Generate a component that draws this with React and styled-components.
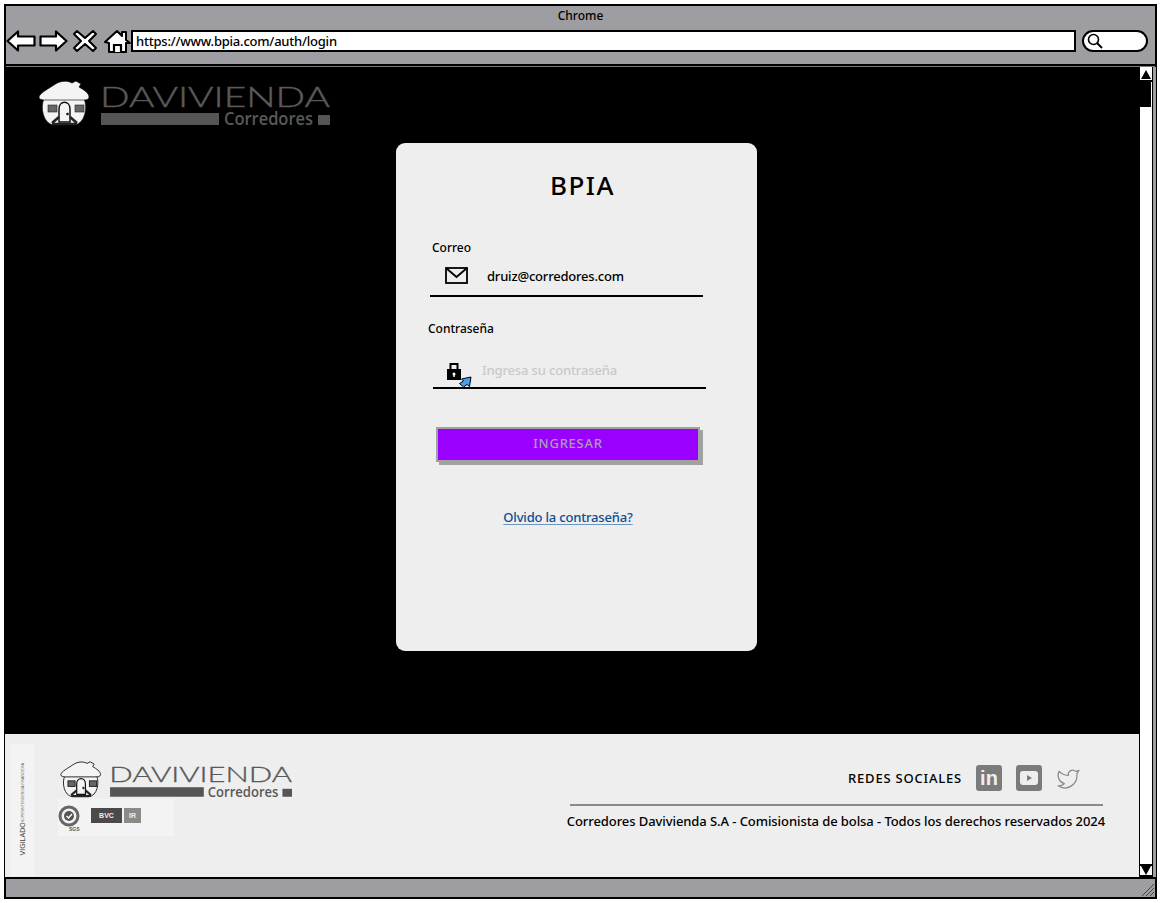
import React from 'react';
import styled, { createGlobalStyle } from 'styled-components';
import { Twitter } from 'lucide-react';

const FONT = `"Comic Sans MS", "Noto Sans", sans-serif`;

const Global = createGlobalStyle`
  html, body { margin: 0; padding: 0; background: #fff; }
  * { box-sizing: border-box; }
  body { font-family: ${FONT}; color: #000; }
`;

const Frame = styled.div`
  width: 1153px; height: 895px; margin: 4px 0 0 4px;
  border: 2px solid #000;
  display: flex; flex-direction: column;
  background: #9e9da2;
`;
const TitleBar = styled.header`
  height: 60px; flex: none; background: #9e9da2;
  display: flex; flex-direction: column;
  border-bottom: 2px solid #000;
`;
const Caption = styled.div`
  height: 22px; padding-top: 1px; text-align: center; font-size: 12px; line-height: 17px;
  font-weight: 500;
`;
const Toolbar = styled.div`
  display: flex; align-items: center; height: 26px;
`;
const NavIcon = styled.svg`
  flex: none; display: block; margin-right: ${p => p.$gap || 0}px;
`;
const UrlBar = styled.div`
  width: 945px; height: 22px; background: #fff; border: 2px solid #000;
  font-size: 13px; font-weight: 500; line-height: 19px; padding-left: 3px; letter-spacing: -.22px;
`;
const SearchPill = styled.div`
  width: 66px; height: 22px; margin-left: 6px; background: #fff; border: 2px solid #000; border-radius: 11px;
  display: flex; align-items: center; padding-left: 3px;
`;
const Viewport = styled.div`
  flex: 1; min-height: 0; display: flex; border-top: 1px solid #7c7c7e;
`;
const Page = styled.main`
  width: 1134px; flex: none; margin-left: -1px; display: flex; flex-direction: column; background: #000;
`;
const Hero = styled.section`
  height: 667px; flex: none; padding: 13px 0 0 33px;
`;
const CardWrap = styled.div`
  margin: 13px 0 0 358px;
`;
const Card = styled.div`
  width: 361px; height: 508px; background: #eee; border-radius: 9px;
  padding: 25px 0 0 34px; display: flex; flex-direction: column;
`;
const Title = styled.h1`
  margin: 0; width: 305px; text-align: center; font-size: 26px; line-height: 34px; font-weight: 500; letter-spacing: 1.5px;
`;
const FieldLabel = styled.label`
  display: block; font-size: 12px; line-height: 16px; font-weight: 500;
  margin: ${p => p.$top}px 0 0 ${p => p.$left}px;
`;
const FieldRow = styled.div`
  width: 273px; height: ${p => p.$h}px; border-bottom: 2px solid #000;
  margin: ${p => p.$top}px 0 0 ${p => p.$left}px; display: flex; align-items: flex-start; position: relative;
  padding-top: ${p => p.$pad}px;
`;
const FieldIcon = styled.svg`
  flex: none; margin-left: ${p => p.$left}px; margin-top: ${p => p.$top || 0}px;
`;
const FieldText = styled.span`
  margin-left: ${p => p.$left}px; font-size: 13px; line-height: 18px; font-weight: 500; letter-spacing: ${p => p.$muted ? '-.14px' : '-.2px'};
  color: ${p => p.$muted ? '#c9c9c9' : '#000'};
`;
const Cursor = styled.svg`
  position: absolute; left: 25px; top: 15px;
`;
const Submit = styled.button`
  width: 264px; height: 35px; margin: 38px 0 0 6px; background: #9900ff; border: 2px solid #a1a1a1;
  box-shadow: 3px 3px 0 0 #a1a1a1; color: #a9a1a9; font-family: ${FONT}; font-size: 13px; line-height: 29px; letter-spacing: .75px; font-weight: 500; padding: 0 0 2px;
`;
const Forgot = styled.a`
  display: block; width: 264px; margin: 46px 0 0 6px; text-align: center; color: #0b4d92; font-size: 13px; line-height: 18px; font-weight: 500;
  text-decoration: underline; text-decoration-color: #6b96c1; text-underline-offset: 2px; letter-spacing: -.18px;
`;
const Footer = styled.footer`
  flex: 1; background: #eee; display: flex; position: relative; min-height: 0;
`;
const Legal = styled.div`
  width: 23px; height: 132px; margin: 10px 0 0 6px; flex: none; background: #f3f3f3;
  display: flex; align-items: flex-end; justify-content: center; padding-bottom: 21px;
`;
const LegalText = styled.div`
  writing-mode: vertical-rl; transform: rotate(180deg); color: #666; font-family: "Liberation Sans", sans-serif; font-size: 3.6px; line-height: 6px; white-space: nowrap;
`;
const LegalStrong = styled.span`
  font-size: 7px; color: #444; margin-right: 3px;
`;
const Brand = styled.div`
  width: 240px; margin-left: 26px; padding-top: 27px; display: flex; flex-direction: column;
`;
const Certs = styled.div`
  width: 116px; height: 37px; margin: -2px 0 0 -2px; background: #f3f3f3; display: flex; align-items: flex-start; padding: 6px 0 0 0;
`;
const CertSeal = styled.svg`flex: none;`;
const CertBox = styled.div`
  width: ${p => p.$w}px; height: 15px; margin: 3px 0 0 ${p => p.$left}px; background: ${p => p.$bg};
  color: #eee; font-family: "Liberation Sans", sans-serif; font-size: 7px; font-weight: 700; line-height: 15px; text-align: center; flex: none;
`;
const Social = styled.div`
  margin-left: auto; width: 540px; margin-right: 34px; padding-top: 30px; display: flex; flex-direction: column; align-items: flex-end;
`;
const SocialRow = styled.div`
  display: flex; align-items: center; height: 28px; padding-right: 24px;
`;
const SocialLabel = styled.span`
  font-size: 13px; font-weight: 500; letter-spacing: .8px; margin-right: 14px;
`;
const Tile = styled.div`
  width: 26px; height: 26px; border-radius: 3px; background: #7b7b7b; color: #eee; margin-right: 14px;
  display: flex; align-items: center; justify-content: center;
  font-family: "Liberation Sans", sans-serif; font-weight: 700; font-size: 20px; line-height: 26px;
`;
const Rule = styled.div`
  width: 533px; height: 2px; background: #8a8a8a; margin: 12px 2px 0 0;
`;
const Copy = styled.div`
  margin-top: 6px; font-size: 13px; font-weight: 500; line-height: 18px; letter-spacing: -.08px; white-space: nowrap;
`;
const Scrollbar = styled.aside`
  width: 14px; flex: none; background: #fff; border-right: 1px solid #000; border-left: 1px solid #000; display: flex; flex-direction: column; padding-top: 2px;
`;
const ScrollBtn = styled.div`
  height: 13px; flex: none; background: #fff; display: flex; align-items: center; justify-content: center;
  border-bottom: 2px solid #000; ${p => p.$down && 'border-top: 2px solid #000;'}
`;
const Thumb = styled.div`
  height: 25px; background: #000; margin-right: 1px; flex: none;
`;
const Track = styled.div`flex: 1;`;
const GripStrip = styled.div`
  width: 3px; background: #9e9da2; flex: none;
`;
const StatusBar = styled.div`
  height: 20px; flex: none; background: #9e9da2; border-top: 2px solid #000; display: flex; justify-content: flex-end; align-items: flex-end;
`;

const Back = () => (
  <NavIcon width="30" height="22" viewBox="0 0 30 22" $gap={3}>
    <path d="M1.5 11 L12 1.5 V6.5 H28.5 V15.5 H12 V20.5 Z" fill="#fff" stroke="#000" strokeWidth="2.2" strokeLinejoin="round" />
  </NavIcon>
);
const Forward = () => (
  <NavIcon width="29" height="22" viewBox="0 0 29 22" $gap={4}>
    <path d="M27.5 11 L17 1.5 V6.5 H1.5 V15.5 H17 V20.5 Z" fill="#fff" stroke="#000" strokeWidth="2.2" strokeLinejoin="round" />
  </NavIcon>
);
const Close = () => (
  <NavIcon width="26" height="24" viewBox="0 0 26 24" $gap={6}>
    <path d="M5 2 L13 9 L21 2 L24 5 L17 12 L24 19 L21 22 L13 15 L5 22 L2 19 L9 12 L2 5 Z" fill="#fff" stroke="#000" strokeWidth="2" strokeLinejoin="round" />
  </NavIcon>
);
const Home = () => (
  <NavIcon width="27" height="24" viewBox="0 0 27 24">
    <path d="M1 13 L13 2 L18 7 V3 H22 V11 L26 14 L22 14 V23 H5 V14 Z" fill="#fff" stroke="#000" strokeWidth="2" strokeLinejoin="round" />
    <path d="M10 23 V16 H17 V23" fill="#fff" stroke="#000" strokeWidth="2.2" />
  </NavIcon>
);

const House = ({ outlined }) => (
  <g stroke={outlined ? '#222' : '#000'} strokeWidth={outlined ? 1.2 : 0.6}>
    <path d="M6 19 L46 19 C50 27 47 44 36 45 L16 45 C5 44 2 27 6 19 Z" fill="#f4f4f4" />
    <path d="M1 17 C2 13 10 9 16 5 C21 1 29 0 34 3 L38 1 L43 4 L41 7 C46 10 51 13 51 17 C51 20 47 20 44 20 L8 20 C5 20 1 20 1 17 Z" fill="#f4f4f4" />
    <rect x="10" y="25" width="9" height="7" fill="#666" stroke="#222" />
    <rect x="37" y="25" width="9" height="7" fill="#666" stroke="#222" />
    <path d="M21 42 V29 C21 20 32 20 32 29 V42 Z" fill="#f4f4f4" stroke="#111" strokeWidth="1.5" />
    <path d="M14 43 L21 37 M39 43 L32 37 M14 44 H39" stroke="#222" strokeWidth="2.6" fill="none" />
    <circle cx="29.5" cy="34" r="1" fill="#111" />
  </g>
);

const Logo = ({ width, outlined }) => (
  <svg width={width} height={width * 50 / 292} viewBox="0 0 292 50" style={{ display: 'block', flex: 'none' }}>
    <House outlined={outlined} />
    <text x="62" y="27" textLength="230" lengthAdjust="spacingAndGlyphs" fontFamily="Lato, sans-serif" fontWeight="300" fontSize="27" fill="#595959" stroke="#595959" strokeWidth=".4">DAVIVIENDA</text>
    <rect x="63" y="33" width="118" height="12" fill="#555" />
    <text x="186" y="45" textLength="89" lengthAdjust="spacingAndGlyphs" fontFamily="Open Sans, sans-serif" fontWeight="600" fontSize="18" fill="#595959">Corredores</text>
    <rect x="280" y="35" width="12" height="10" fill="#555" />
  </svg>
);

export default function App() {
  return (
    <Frame>
      <Global />
      <TitleBar>
        <Caption>Chrome</Caption>
        <Toolbar>
          <Back /><Forward /><Close /><Home />
          <UrlBar>https://www.bpia.com/auth/login</UrlBar>
          <SearchPill>
            <svg width="16" height="16" viewBox="0 0 16 16" fill="none" stroke="#000" strokeWidth="1.6">
              <circle cx="6.5" cy="6.5" r="5" /><path d="M10 10 L15 15" strokeWidth="2" />
            </svg>
          </SearchPill>
        </Toolbar>
      </TitleBar>
      <Viewport>
        <Page>
          <Hero>
            <Logo width={292} />
            <CardWrap>
              <Card>
                <Title>BPIA</Title>
                <FieldLabel $top={38} $left={2}>Correo</FieldLabel>
                <FieldRow $top={3} $left={0} $h={38} $pad={8}>
                  <FieldIcon width="23" height="17" viewBox="0 0 23 17" $left={15} fill="none" stroke="#000" strokeWidth="1.8">
                    <rect x="1" y="1" width="21" height="15" /><path d="M1 1 L11.5 10 L22 1" />
                  </FieldIcon>
                  <FieldText $left={19}>druiz@corredores.com</FieldText>
                </FieldRow>
                <FieldLabel $top={24} $left={-2}>Contraseña</FieldLabel>
                <FieldRow $top={24} $left={3} $h={28} $pad={0}>
                  <FieldIcon width="14" height="18" viewBox="0 0 14 18" $left={14} $top={1}>
                    <path d="M3.5 8 V2 H10.5 V8" fill="none" stroke="#000" strokeWidth="2" />
                    <rect x="0" y="7" width="14" height="11" fill="#000" />
                    <circle cx="7" cy="12" r="1.5" fill="#fff" /><rect x="6.3" y="12" width="1.4" height="3" fill="#fff" />
                  </FieldIcon>
                  <FieldText $left={21} $muted>Ingresa su contraseña</FieldText>
                  <Cursor width="14" height="12" viewBox="0 0 14 12">
                    <path d="M13 1 L11.5 10.5 L9 8.5 L5.5 11 L1.5 7.5 L5.5 5 L3.5 3 Z" fill="#4a9df0" stroke="#000" strokeWidth="1" strokeLinejoin="round" />
                  </Cursor>
                </FieldRow>
                <Submit type="button">INGRESAR</Submit>
                <Forgot href="#">Olvido la contraseña?</Forgot>
              </Card>
            </CardWrap>
          </Hero>
          <Footer>
            <Legal><LegalText><LegalStrong>VIGILADO</LegalStrong>SUPERINTENDENCIA FINANCIERA</LegalText></Legal>
            <Brand>
              <Logo width={232} outlined />
              <Certs>
                <CertSeal width="22" height="27" viewBox="0 0 22 27">
                  <circle cx="11" cy="11" r="9" fill="none" stroke="#666" strokeWidth="3" />
                  <circle cx="11" cy="11" r="5" fill="#555" />
                  <path d="M8.5 11 L10.5 13 L14 9" stroke="#fff" strokeWidth="1.4" fill="none" />
                  <text x="11" y="26" fontFamily="Liberation Sans, sans-serif" fontSize="5" fontWeight="700" fill="#555">SGS</text>
                </CertSeal>
                <CertBox $w={31} $left={11} $bg="#4a4a4a">BVC</CertBox>
                <CertBox $w={17} $left={2} $bg="#8a8a8a">IR</CertBox>
              </Certs>
            </Brand>
            <Social>
              <SocialRow>
                <SocialLabel>REDES SOCIALES</SocialLabel>
                <Tile>in</Tile>
                <Tile>
                  <svg width="18" height="14" viewBox="0 0 18 14"><rect width="18" height="14" rx="3" fill="#eee" /><path d="M7 4 L12 7 L7 10 Z" fill="#7b7b7b" /></svg>
                </Tile>
                <Twitter size={25} color="#8a8a8a" strokeWidth={1.2} />
              </SocialRow>
              <Rule />
              <Copy>Corredores Davivienda S.A - Comisionista de bolsa - Todos los derechos reservados 2024</Copy>
            </Social>
          </Footer>
        </Page>
        <Scrollbar>
          <ScrollBtn><svg width="10" height="9" viewBox="0 0 10 9"><path d="M5 0 L10 9 H0 Z" /></svg></ScrollBtn>
          <Thumb />
          <Track />
          <ScrollBtn $down><svg width="10" height="9" viewBox="0 0 10 9"><path d="M5 9 L10 0 H0 Z" /></svg></ScrollBtn>
        </Scrollbar>
        <GripStrip />
      </Viewport>
      <StatusBar>
        <svg width="14" height="14" viewBox="0 0 14 14" stroke="#444" strokeWidth="1"><path d="M1 13 L13 1 M5 13 L13 5 M9 13 L13 9" /></svg>
      </StatusBar>
    </Frame>
  );
}
